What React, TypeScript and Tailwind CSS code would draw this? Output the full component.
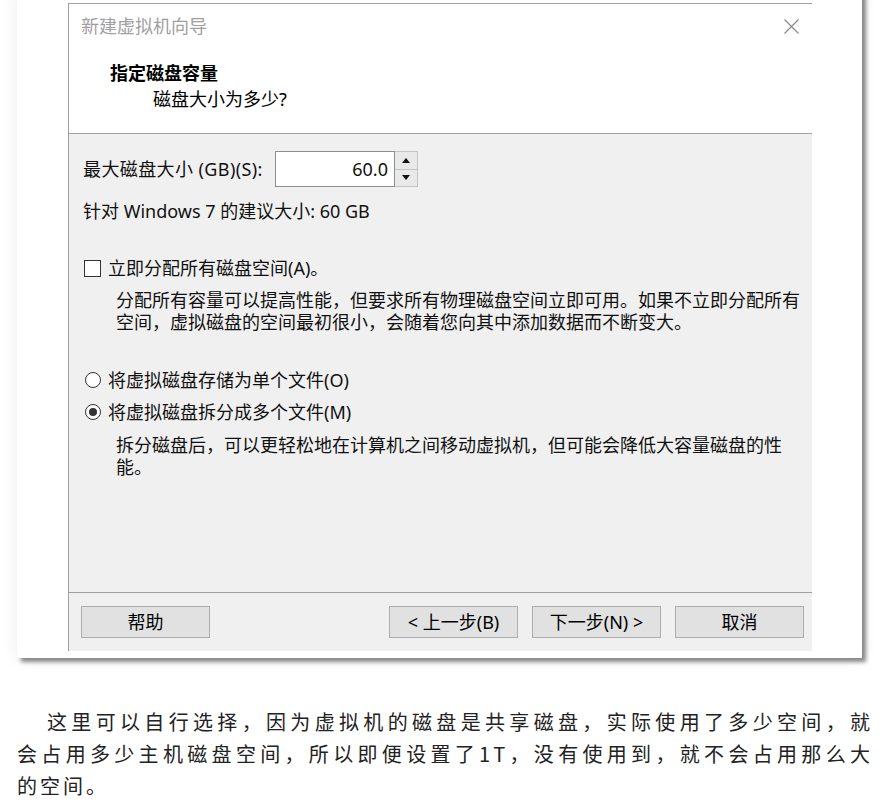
import React from "react";

function Radio({ checked }: { checked?: boolean }) {
  return (
    <span className="flex h-[16px] w-[16px] shrink-0 items-center justify-center rounded-full border border-[#333333] bg-white">
      {checked ? <span className="h-[8px] w-[8px] rounded-full bg-[#333333]" /> : null}
    </span>
  );
}

function Btn({ children }: { children: React.ReactNode }) {
  return (
    <div className="flex h-[32px] w-[129px] items-center justify-center border border-[#adadad] bg-[#e1e1e1] text-[18px] leading-[24px] text-black">
      {children}
    </div>
  );
}

export default function App() {
  return (
    <div className="h-[804px] w-[890px] overflow-hidden bg-white font-['Noto_Sans','Noto_Sans_CJK_SC',sans-serif]">
      <div className="pl-[17px]">
        <div className="-mt-[10px] h-[668px] w-[845px] bg-white pl-[51px] pt-[13px] shadow-[4px_4px_4px_rgba(0,0,0,0.45),0_0_16px_rgba(0,0,0,0.08)]">
          <div className="flex h-[648px] w-[744px] flex-col border-l border-t border-[#a0a0a0]">
            {/* header */}
            <div className="h-[130px] shrink-0 border-b border-[#a0a0a0] bg-white">
              <div className="mt-[10px] flex h-[24px] items-center justify-between pl-[12px] pr-[12px]">
                <span className="text-[18px] leading-[24px] text-[#a0a0a0]">新建虚拟机向导</span>
                <svg width="15" height="15" viewBox="0 0 15 15" className="mr-[1px]">
                  <path d="M0.5 0.5 L14.5 14.5 M14.5 0.5 L0.5 14.5" stroke="#8a8a8a" strokeWidth="1.2" fill="none" />
                </svg>
              </div>
              <div className="mt-[23px] pl-[41px] text-[18px] font-bold leading-[24px] text-black">指定磁盘容量</div>
              <div className="mt-[2px] pl-[84px] text-[18px] leading-[24px] text-black">磁盘大小为多少?</div>
            </div>

            {/* body */}
            <div className="flex-1 bg-[#f0f0f0] pl-[14px] text-[18px] text-[#111111]">
              <div className="mt-[17px] flex h-[36px] items-center">
                <span className="w-[192px] leading-[24px] tracking-[0.4px]">最大磁盘大小 (GB)(S):</span>
                <div className="flex h-[36px] items-stretch">
                  <div className="flex w-[120px] items-center justify-end border border-[#8f8f8f] bg-white pr-[6px] leading-[24px]">
                    60.0
                  </div>
                  <div className="flex w-[23px] flex-col border border-l-0 border-[#c4c4c4] bg-[#f5f5f5]">
                    <div className="flex flex-1 items-center justify-center border-b border-[#c4c4c4] bg-[#e9e9e9]">
                      <svg width="8" height="5" viewBox="0 0 8 5">
                        <path d="M0 5 L4 0 L8 5 Z" fill="#111" />
                      </svg>
                    </div>
                    <div className="flex flex-1 items-center justify-center bg-[#e9e9e9]">
                      <svg width="8" height="5" viewBox="0 0 8 5">
                        <path d="M0 0 L8 0 L4 5 Z" fill="#111" />
                      </svg>
                    </div>
                  </div>
                </div>
              </div>

              <div className="mt-[12px] leading-[24px]">针对 Windows 7 的建议大小: 60 GB</div>

              <div className="mt-[33px] flex h-[24px] items-center">
                <span className="ml-[1px] h-[17px] w-[17px] shrink-0 border border-[#333333] bg-white" />
                <span className="ml-[7px] leading-[24px]">立即分配所有磁盘空间(A)。</span>
              </div>

              <div className="mt-[9px] pl-[33px] leading-[22px]">
                <div>分配所有容量可以提高性能，但要求所有物理磁盘空间立即可用。如果不立即分配所有</div>
                <div>空间，虚拟磁盘的空间最初很小，会随着您向其中添加数据而不断变大。</div>
              </div>

              <div className="mt-[35px] flex h-[24px] items-center pl-[2px]">
                <Radio />
                <span className="ml-[7px] leading-[24px]">将虚拟磁盘存储为单个文件(O)</span>
              </div>
              <div className="mt-[8px] flex h-[24px] items-center pl-[2px]">
                <Radio checked />
                <span className="ml-[7px] leading-[24px]">将虚拟磁盘拆分成多个文件(M)</span>
              </div>

              <div className="mt-[10px] pl-[33px] leading-[22px]">
                <div>拆分磁盘后，可以更轻松地在计算机之间移动虚拟机，但可能会降低大容量磁盘的性</div>
                <div>能。</div>
              </div>
            </div>

            {/* footer */}
            <div className="flex h-[59px] shrink-0 items-start border-t border-[#a0a0a0] bg-[#f0f0f0] pl-[12px] pt-[13px]">
              <Btn>帮助</Btn>
              <div className="ml-[179px] flex gap-[14px]">
                <Btn>&lt; 上一步(B)</Btn>
                <Btn>下一步(N) &gt;</Btn>
                <Btn>取消</Btn>
              </div>
            </div>
          </div>
        </div>
      </div>

      <div className="ml-[17px] mt-[48px] w-[856px] font-['Noto_Sans_CJK_SC',sans-serif] text-[20px] leading-[32px] tracking-[3px] text-[#222222]">
        <div className="pl-[30px] text-justify [text-align-last:justify]">这里可以自行选择，因为虚拟机的磁盘是共享磁盘，实际使用了多少空间，就</div>
        <div className="text-justify [text-align-last:justify]">会占用多少主机磁盘空间，所以即便设置了1T，没有使用到，就不会占用那么大</div>
        <div>的空间。</div>
      </div>
    </div>
  );
}
